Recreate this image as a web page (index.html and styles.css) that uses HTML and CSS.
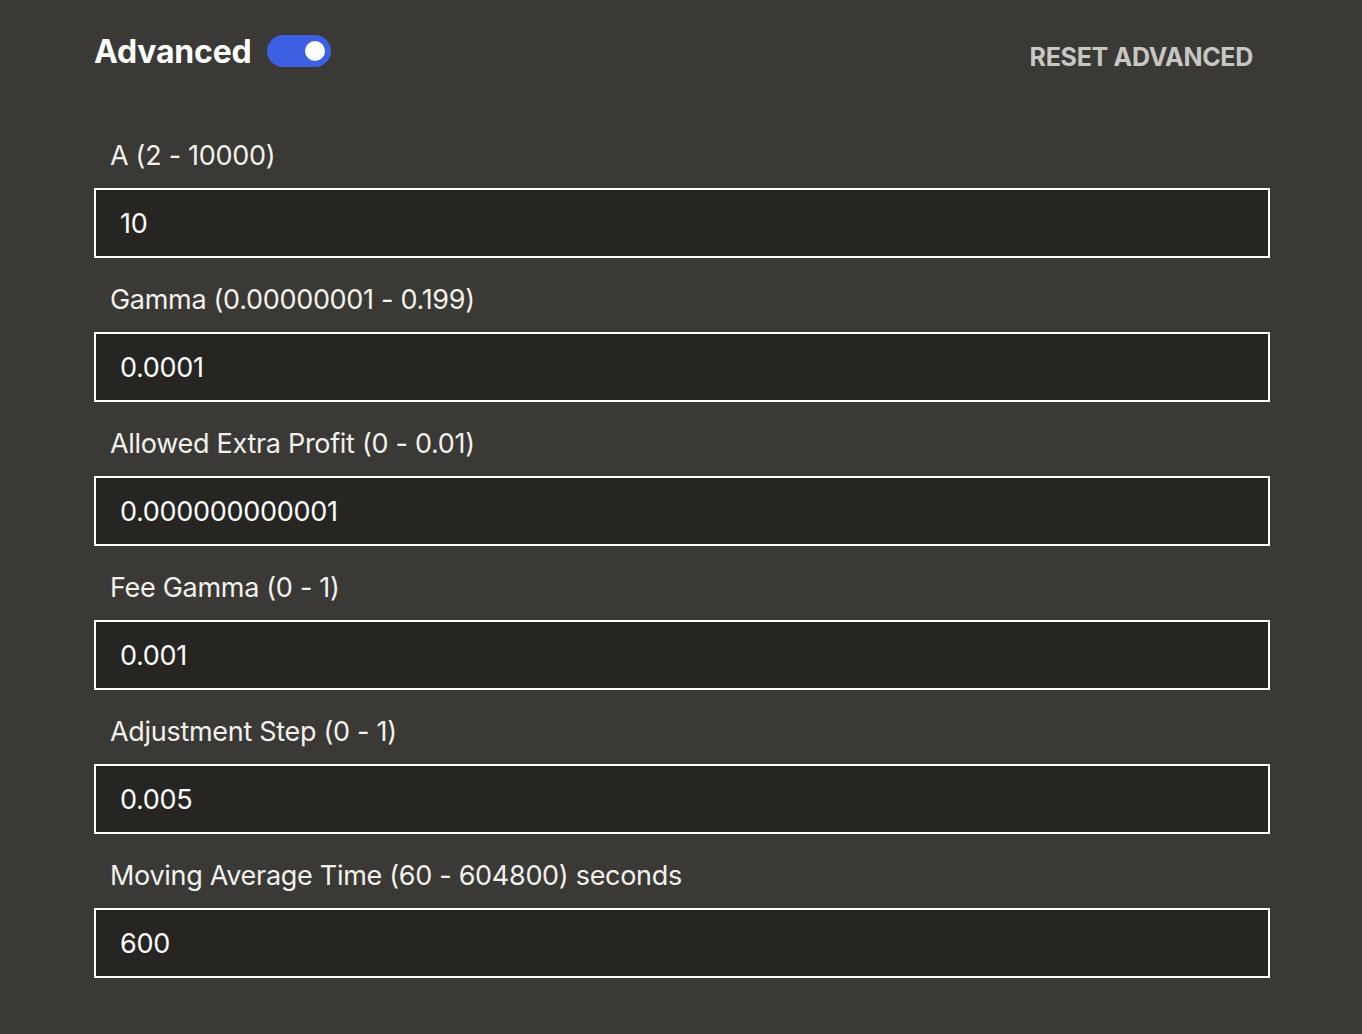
FILE: index.html
```html
<!DOCTYPE html>
<html lang="en">
<head>
<meta charset="utf-8">
<title>Advanced</title>
<link rel="stylesheet" href="styles.css">
</head>
<body>
<main class="panel">
  <header class="head">
    <div class="head-left">
      <h2 class="title">Advanced</h2>
      <span class="toggle" role="switch" aria-checked="true"><span class="knob"></span></span>
    </div>
    <button class="reset" type="button">RESET ADVANCED</button>
  </header>
  <div class="fields">
    <label class="field"><span class="label">A (2 - 10000)</span><input class="input" value="10"></label>
    <label class="field"><span class="label">Gamma (0.00000001 - 0.199)</span><input class="input" value="0.0001"></label>
    <label class="field"><span class="label">Allowed Extra Profit (0 - 0.01)</span><input class="input" value="0.000000000001"></label>
    <label class="field"><span class="label">Fee Gamma (0 - 1)</span><input class="input" value="0.001"></label>
    <label class="field"><span class="label">Adjustment Step (0 - 1)</span><input class="input" value="0.005"></label>
    <label class="field"><span class="label">Moving Average Time (60 - 604800) seconds</span><input class="input" value="600"></label>
  </div>
</main>
</body>
</html>
```
FILE: styles.css
```css
html, body {
  margin: 0;
  padding: 0;
  background: #3a3935;
}
body {
  font-family: "Inter", "Liberation Sans", sans-serif;
  color: #ffffff;
}
.panel {
  width: 1176px;
  padding: 20px 0 0 94px;
}
.head {
  display: flex;
  justify-content: space-between;
  align-items: center;
  height: 64px;
}
.head-left {
  display: flex;
  align-items: center;
  gap: 15px;
}
.title {
  margin: 0;
  font-size: 32px;
  font-weight: 700;
  letter-spacing: -0.2px;
  line-height: 1;
}
.toggle {
  display: inline-flex;
  align-items: center;
  justify-content: flex-end;
  width: 64px;
  height: 32px;
  border-radius: 16px;
  background: #3d5fe2;
  padding: 0 6px;
  box-sizing: border-box;
  margin-top: -3px;
}
.knob {
  width: 20px;
  height: 20px;
  border-radius: 50%;
  background: #ffffff;
}
.reset {
  background: none;
  border: none;
  padding: 0 17px 0 0;
  font-family: inherit;
  font-size: 25px;
  font-weight: 700;
  color: #c9c7c3;
  letter-spacing: -0.3px;
  margin-top: 10px;
}
.fields {
  display: flex;
  flex-direction: column;
  padding-top: 52px;
}
.field {
  display: flex;
  flex-direction: column;
}
.label {
  display: block;
  box-sizing: border-box;
  padding: 4px 0 0 16px;
  font-size: 27px;
  line-height: 32px;
  height: 52px;
  color: #f2f1ee;
  letter-spacing: -0.3px;
}
.input {
  box-sizing: border-box;
  width: 1176px;
  height: 70px;
  margin: 0 0 22px 0;
  background: #262521;
  border: 2px solid #ffffff;
  border-radius: 0;
  padding: 0 24px;
  font-family: inherit;
  font-size: 27px;
  color: #ffffff;
  letter-spacing: -0.3px;
  outline: none;
}
```
